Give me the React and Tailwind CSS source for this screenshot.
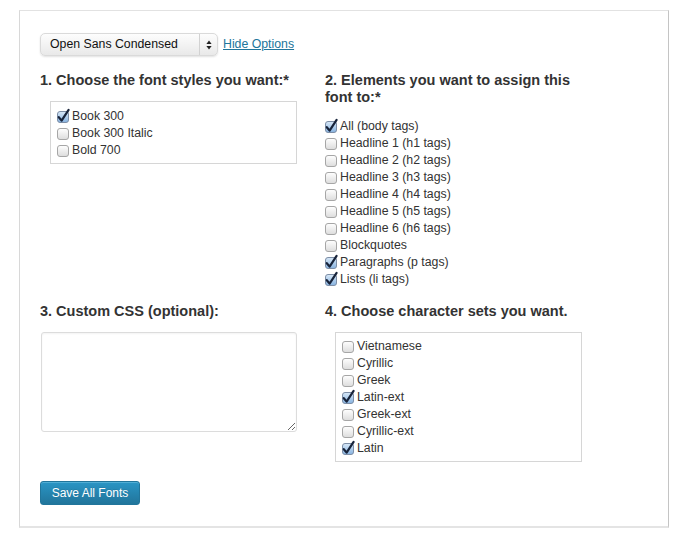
import React from "react";

function Box({ checked }) {
  return (
    <svg width="12" height="12" viewBox="0 0 12 12" className="shrink-0 overflow-visible">
      <defs>
        <linearGradient id="cbOff" x1="0" y1="0" x2="0" y2="1">
          <stop offset="0" stopColor="#ffffff" />
          <stop offset="1" stopColor="#dcdcdc" />
        </linearGradient>
        <linearGradient id="cbOn" x1="0" y1="0" x2="0" y2="1">
          <stop offset="0" stopColor="#d9e9f8" />
          <stop offset="1" stopColor="#86b2e0" />
        </linearGradient>
      </defs>
      <rect x="0.5" y="0.5" width="11" height="11" rx="2.5" fill={checked ? "url(#cbOn)" : "url(#cbOff)"} stroke={checked ? "#7d8ea6" : "#a6a6a6"} />
      {checked && (
        <path d="M1.8 6.2 L4.6 9.6 L11.6 -1.2" fill="none" stroke="#17233a" strokeWidth="2.2" strokeLinecap="round" strokeLinejoin="round" />
      )}
    </svg>
  );
}

function Item({ label, checked }) {
  return (
    <div className="flex items-center h-[17px] gap-[3px] text-[12.3px] text-[#333]">
      <Box checked={checked} />
      <span>{label}</span>
    </div>
  );
}

export default function App() {
  const styles = [
    ["Book 300", true],
    ["Book 300 Italic", false],
    ["Bold 700", false],
  ];
  const elements = [
    ["All (body tags)", true],
    ["Headline 1 (h1 tags)", false],
    ["Headline 2 (h2 tags)", false],
    ["Headline 3 (h3 tags)", false],
    ["Headline 4 (h4 tags)", false],
    ["Headline 5 (h5 tags)", false],
    ["Headline 6 (h6 tags)", false],
    ["Blockquotes", false],
    ["Paragraphs (p tags)", true],
    ["Lists (li tags)", true],
  ];
  const sets = [
    ["Vietnamese", false],
    ["Cyrillic", false],
    ["Greek", false],
    ["Latin-ext", true],
    ["Greek-ext", false],
    ["Cyrillic-ext", false],
    ["Latin", true],
  ];
  const heading = "text-[14.5px] leading-[17px] font-bold text-[#333]";
  return (
    <div className="w-[690px] h-[540px] bg-white pt-[10px] pl-[19px]" style={{ fontFamily: '"Liberation Sans", Arial, Helvetica, sans-serif' }}>
      <div className="w-[650px] h-[518px] border border-[#e2e2e2] border-l-[#d8d8d8] border-r-[#c4c4c4] border-b-2 border-b-[#e4e4e4] pl-[20px] pt-[22px]">
        <div className="flex items-center h-[23px]">
          <div className="w-[178px] h-[23px] rounded-[5px] border border-[#dadada] bg-gradient-to-b from-[#fdfdfd] to-[#e9e9e9] shadow-[0_1px_2px_rgba(0,0,0,0.12)] flex items-center">
            <span className="flex-1 pl-[9px] text-[12.3px] text-[#111]">Open Sans Condensed</span>
            <div className="w-px h-[21px] bg-[#d2d2d2]" />
            <div className="w-[17px] flex justify-center">
              <svg width="6" height="10" viewBox="0 0 6 10">
                <path d="M3 0.5 L5.6 4 L0.4 4 Z" fill="#222" />
                <path d="M3 9.5 L5.6 6 L0.4 6 Z" fill="#222" />
              </svg>
            </div>
          </div>
          <a className="ml-[5px] text-[12.3px] text-[#21759b] underline">Hide Options</a>
        </div>

        <div className="grid grid-cols-[285px_1fr] mt-[16px]">
          <div>
            <div className={heading}>1. Choose the font styles you want:*</div>
            <div className="mt-[12px] ml-[10px] w-[247px] border border-[#d6d6d6] pl-[6px] pt-[6px] pb-[4px]">
              {styles.map(([l, c]) => (
                <Item key={l} label={l} checked={c} />
              ))}
            </div>
          </div>
          <div>
            <div className={heading}>
              2. Elements you want to assign this
              <br />
              font to:*
            </div>
            <div className="mt-[12px]">
              {elements.map(([l, c]) => (
                <Item key={l} label={l} checked={c} />
              ))}
            </div>
          </div>
        </div>

        <div className="grid grid-cols-[285px_1fr] mt-[15px]">
          <div>
            <div className={heading}>3. Custom CSS (optional):</div>
            <textarea className="block mt-[12px] ml-px w-[256px] h-[100px] rounded-[3px] border border-[#dcdcdc] bg-white shadow-[inset_0_1px_2px_rgba(0,0,0,0.05)] outline-none" />
          </div>
          <div>
            <div className={heading}>4. Choose character sets you want.</div>
            <div className="mt-[12px] ml-[10px] w-[247px] border border-[#d6d6d6] pl-[6px] pt-[5px] pb-[4px]">
              {sets.map(([l, c]) => (
                <Item key={l} label={l} checked={c} />
              ))}
            </div>
          </div>
        </div>

        <button className="mt-[19px] w-[100px] h-[24px] rounded-[3px] border border-[#21759b] bg-gradient-to-b from-[#2a95c5] to-[#21759b] text-white text-[12px] shadow-[inset_0_1px_0_rgba(120,200,230,0.5)] [text-shadow:0_-1px_0_rgba(0,0,0,0.1)]">
          Save All Fonts
        </button>
      </div>
    </div>
  );
}
